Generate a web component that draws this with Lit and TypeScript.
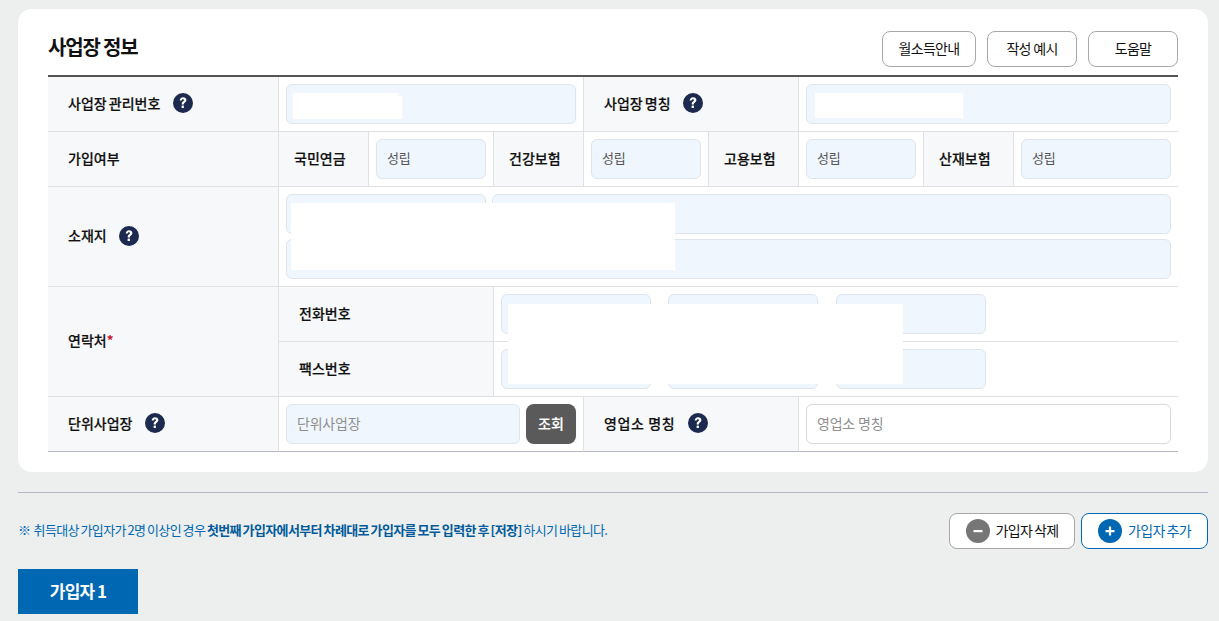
import { LitElement, html, css, svg } from "lit";
import { customElement } from "lit/decorators.js";

const help = html`<svg class="help" width="20" height="20" viewBox="0 0 20 20" aria-hidden="true">
  <circle cx="10" cy="10" r="10" fill="#1b2a4e"></circle>
  ${svg`<path d="M6.7 7.7c0-2.1 1.4-3.4 3.4-3.4 1.9 0 3.3 1.1 3.3 2.8 0 1.3-.7 1.9-1.6 2.6-.7.5-.9.8-.9 1.4v.4H8.7v-.6c0-1.1.4-1.8 1.2-2.4.7-.5 1-.8 1-1.3 0-.6-.4-1-1-1-.7 0-1.1.5-1.2 1.4H6.7z" fill="#fff"></path>
  <rect x="8.6" y="12.6" width="2.3" height="2.5" rx=".4" fill="#fff"></rect>`}
</svg>`;

@customElement("app-root")
export class AppRoot extends LitElement {
  static styles = css`
    :host {
      display: block;
      box-sizing: border-box;
      height: 621px;
      overflow: hidden;
      padding: 9px 11px 0 18px;
      background: #edefee;
      font-family: "Noto Sans CJK KR", "Noto Sans", sans-serif;
      font-size: 14px;
      letter-spacing: 0;
      word-spacing: -1px;
      color: #111;
    }
    * { box-sizing: border-box; }
    .card {
      background: #fff;
      border-radius: 14px;
      padding: 22px 30px 20px;
    }
    .head {
      display: flex;
      align-items: center;
      justify-content: space-between;
      margin-bottom: 8px;
    }
    h2 {
      margin: 0;
      font-size: 20px;
      font-weight: 700;
      letter-spacing: -1.2px;
      word-spacing: 0;
      line-height: 32px;
      position: relative;
      top: -2px;
    }
    .tools { display: flex; gap: 11px; }
    .btn {
      height: 36px;
      border: 1px solid #a9a9a9;
      border-radius: 8px;
      background: #fff;
      color: #111;
      font: inherit;
      letter-spacing: -0.6px;
      word-spacing: inherit;
      padding: 0 0 3px;
      display: flex;
      align-items: center;
      justify-content: center;
    }
    .tools .btn { word-spacing: 0; letter-spacing: -0.7px; }
    .w94 { width: 94px; }
    .w90 { width: 90px; }
    .table {
      position: relative;
      display: grid;
      grid-template-columns: 231px 90px 125px 90px 125px 90px 125px 90px 164px;
      grid-template-rows: 55px 55px 100px 55px 55px 55px;
      border-top: 2px solid #555;
    }
    .th, .td {
      border-right: 1px solid #e0e1e4;
      border-bottom: 1px solid #e0e1e4;
      display: flex;
      align-items: center;
    }
    .th {
      background: #f7f8fa;
      padding: 0 0 3px 20px;
      font-weight: 500;
      -webkit-text-stroke: 0.2px;
    }
    .th.tight { padding-left: 15px; }
    .td { padding: 0 7px; background: #fff; }
    .end { border-right: 0; }
    .last { border-bottom-color: #b4b6c0; }
    .s2 { grid-column: span 2; }
    .s3 { grid-column: span 3; }
    .s6 { grid-column: span 6; }
    .s8 { grid-column: span 8; }
    .r2 { grid-row: span 2; }
    .req { color: #c8102e; }
    .wide { letter-spacing: 0.6px; word-spacing: 0; }
    input {
      width: 100%;
      min-width: 0;
      height: 40px;
      border: 1px solid #dfe5ee;
      border-radius: 6px;
      background: #f0f6fe;
      padding: 0 10px 3px;
      font: inherit;
      font-size: 14px;
      letter-spacing: -0.2px;
      word-spacing: 0;
      color: #555;
      outline: none;
    }
    input.val { font-size: 13px; }
    input::placeholder { color: #8f8f8f; opacity: 1; }
    input.white { background: #fff; border-color: #d9d9d9; }
    .stack { flex-direction: column; align-items: stretch; gap: 5px; justify-content: center; }
    .line { display: flex; gap: 6px; }
    .addr { flex: 0 0 200px; width: 200px; }
    .phones { display: flex; gap: 17px; }
    .phones input { width: 150px; }
    .phones input:last-child { margin-left: 1px; }
    .search { display: flex; gap: 6px; width: 100%; }
    .search input { flex: 1; }
    .query {
      flex: 0 0 50px;
      height: 40px;
      border: 0;
      border-radius: 8px;
      background: #5a5a5a;
      color: #fff;
      font: inherit;
      font-weight: 500;
      -webkit-text-stroke: 0.2px;
      padding: 0 0 3px;
    }
    .help { flex: none; margin-left: 12.4px; position: relative; top: .5px; }
    .mask { position: absolute; background: #fff; }
    .m1 { left: 245px; top: 16px; width: 105px; height: 26px; }
    .m1b { left: 245px; top: 19px; width: 109px; height: 23px; }
    .m2 { left: 767px; top: 16px; width: 148px; height: 25px; }
    .m3 { left: 243px; top: 126px; width: 384px; height: 67px; }
    .m4 { left: 460px; top: 227px; width: 395px; height: 80px; }
    hr {
      margin: 20px 0;
      border: 0;
      height: 1px;
      background: #b4b8c8;
    }
    .note-row {
      display: flex;
      align-items: center;
      justify-content: space-between;
      height: 36px;
    }
    .note {
      margin: 0 0 3px;
      font-size: 13px;
      letter-spacing: -0.62px;
      word-spacing: -0.7px;
      color: #0068b3;
    }
    .note b { font-weight: 700; color: #005a9c; }
    .acts { display: flex; gap: 6px; }
    .act { gap: 6px; }
    .act svg { position: relative; top: 1.5px; }
    .del { width: 126px; }
    .add { width: 127px; border-color: #0068b3; color: #0068b3; }
    .tab {
      margin-top: 20px;
      width: 120px;
      height: 45px;
      background: #0068b3;
      color: #fff;
      font-size: 17px;
      font-weight: 700;
      letter-spacing: -0.8px;
      word-spacing: -0.5px;
      padding-bottom: 3px;
      display: flex;
      align-items: center;
      justify-content: center;
    }
  `;

  render() {
    return html`
      <section class="card">
        <div class="head">
          <h2>사업장 정보</h2>
          <div class="tools">
            <button class="btn w94">월소득안내</button>
            <button class="btn w90">작성 예시</button>
            <button class="btn w90">도움말</button>
          </div>
        </div>
        <div class="table">
          <div class="th">사업장 관리번호${help}</div>
          <div class="td s3"><input readonly /></div>
          <div class="th s2">사업장 명칭${help}</div>
          <div class="td s3 end"><input readonly /></div>

          <div class="th">가입여부</div>
          <div class="th tight">국민연금</div>
          <div class="td"><input class="val" readonly value="성립" /></div>
          <div class="th tight">건강보험</div>
          <div class="td"><input class="val" readonly value="성립" /></div>
          <div class="th tight">고용보험</div>
          <div class="td"><input class="val" readonly value="성립" /></div>
          <div class="th tight">산재보험</div>
          <div class="td end"><input class="val" readonly value="성립" /></div>

          <div class="th">소재지${help}</div>
          <div class="td s8 end stack">
            <div class="line"><input class="addr" readonly /><input readonly /></div>
            <input readonly />
          </div>

          <div class="th r2"><span>연락처<span class="req">*</span></span></div>
          <div class="th s2">전화번호</div>
          <div class="td s6 end"><div class="phones"><input readonly /><input readonly /><input readonly /></div></div>
          <div class="th s2">팩스번호</div>
          <div class="td s6 end"><div class="phones"><input readonly /><input readonly /><input readonly /></div></div>

          <div class="th last">단위사업장${help}</div>
          <div class="td s3 last">
            <div class="search"><input placeholder="단위사업장" /><button class="query">조회</button></div>
          </div>
          <div class="th s2 last"><span class="wide">영업소 명칭</span>${help}</div>
          <div class="td s3 end last"><input class="white" placeholder="영업소 명칭" /></div>

          <div class="mask m1"></div>
          <div class="mask m1b"></div>
          <div class="mask m2"></div>
          <div class="mask m3"></div>
          <div class="mask m4"></div>
        </div>
      </section>
      <hr />
      <div class="note-row">
        <p class="note">※&nbsp; 취득대상 가입자가 2명 이상인 경우 <b>첫번째 가입자에서부터 차례대로 가입자를 모두 입력한 후 [저장]</b> 하시기 바랍니다.</p>
        <div class="acts">
          <button class="btn act del">
            <svg width="24" height="24" viewBox="0 0 24 24" aria-hidden="true"><circle cx="12" cy="12" r="12" fill="#767676"></circle><rect x="7.5" y="11" width="9" height="2.2" fill="#fff"></rect></svg>
            가입자 삭제
          </button>
          <button class="btn act add">
            <svg width="24" height="24" viewBox="0 0 24 24" aria-hidden="true"><circle cx="12" cy="12" r="12" fill="#0068b3"></circle><path d="M7.5 11h3.4V7.6h2.2V11h3.4v2.2h-3.4v3.4h-2.2v-3.4H7.5z" fill="#fff"></path></svg>
            가입자 추가
          </button>
        </div>
      </div>
      <div class="tab">가입자 1</div>
    `;
  }
}
